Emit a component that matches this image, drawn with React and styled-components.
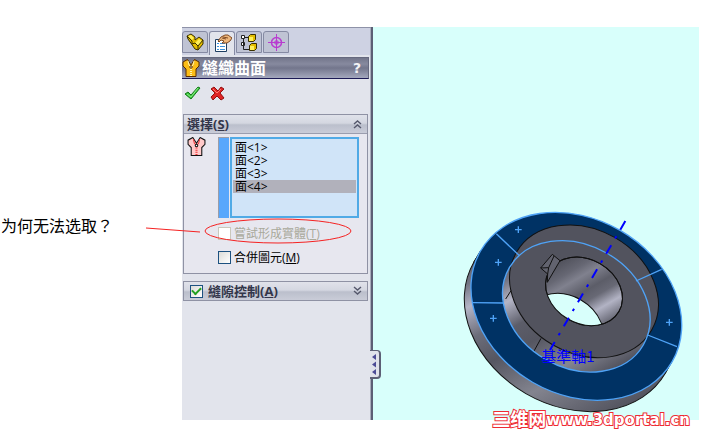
import React from 'react'
import styled, { createGlobalStyle } from 'styled-components'

const GlobalStyle = createGlobalStyle`
    * {
        box-sizing: border-box;
    }
    body {
        margin: 0;
        background: #fff;
        color: #000;
        font-family: 'Open Sans', 'Noto Sans CJK TC', sans-serif;
        font-size: 12px;
    }
`
const Page = styled.main`
    display: flex;
    min-height: 100vh;
    padding: 27px 11px 13px 0;
`
const Caption = styled.p`
    flex: none;
    width: 182px;
    margin: 0;
    padding: 186px 0 0 1px;
    font-family: 'Noto Sans CJK TC', 'Noto Sans CJK SC', sans-serif;
    font-size: 16px;
    line-height: 24px;
`
const Panel = styled.aside`
    position: relative;
    z-index: 1;
    flex: none;
    width: 191px;
    background: #e2e4ec;
    border-right: 2px solid #5c5f75;
    box-shadow: inset -1px 0 #a9acbc;
`
const Tabs = styled.div`
    display: flex;
    align-items: flex-end;
    gap: 1px;
    height: 28px;
    background: #ced2e3;
    border-top: 1px solid #8e92a8;
    box-shadow: inset -1px 0 #a9acbc;
`
const Tab = styled.button`
    display: flex;
    align-items: center;
    justify-content: center;
    width: 26px;
    height: ${props => props.$active ? '24px' : '22px'};
    margin-bottom: ${props => props.$active ? '0' : '2px'};
    padding: 0;
    background: ${props => props.$active ? '#e2e4ec' : '#bfc3d4'};
    border: 1px solid #858aa3;
    border-bottom-width: ${props => props.$active ? '0' : '1px'};
    border-radius: 3px 3px 0 0;
`
const TitleBar = styled.header`
    display: flex;
    align-items: center;
    gap: 2px;
    height: 22px;
    margin: 2px 2px 0 0;
    background: linear-gradient(#73768b, #878a9f 30%, #73768c 50%, #a4a8bd);
    border: solid #66697f;
    border-width: 1px 1px 1px 0;
    border-bottom-color: #1c1a55;
    color: #fff;
`
const Title = styled.h1`
    flex: 1;
    margin: 0;
    font-size: 16px;
    line-height: 18px;
`
const HelpButton = styled.button`
    width: 22px;
    padding: 0;
    background: none;
    border: 0;
    color: #f2f2f5;
    font-family: 'DejaVu Sans', sans-serif;
    font-size: 14px;
    font-weight: 700;
    line-height: 18px;
`
const Confirm = styled.div`
    display: flex;
    align-items: center;
    gap: 9px;
    height: 28px;
    padding-left: 2px;
`
const IconButton = styled.button`
    display: flex;
    padding: 0;
    background: none;
    border: 0;
`
const Group = styled.section`
    margin: 7px 3px 0 1px;
    background: #e7e7ef;
    border: 1px solid #8f92a4;
`
const GroupHead = styled.div`
    display: flex;
    align-items: center;
    gap: 5px;
    height: ${props => props.$checkable ? '18px' : '19px'};
    padding: 0 5px 0 ${props => props.$checkable ? '6px' : '3px'};
    background: linear-gradient(#e0e2ea, #d4d7e1 45%, #bbbfcc 55%, #c9ccd8);
    border-bottom: ${props => props.$checkable ? '0' : '1px solid #9a9dae'};
`
const GroupTitle = styled.h2`
    flex: 1;
    margin: 0;
    color: #33364a;
    font-size: 13px;
    line-height: 18px;
`
const Selection = styled.div`
    display: flex;
    padding: 3px 8px 0 3px;
`
const ColorBar = styled.div`
    width: 11px;
    margin: 0 1px 0 12px;
    background: #58a7fc;
    border: solid #9b9da8;
    border-width: 1px 0 0 1px;
`
const FaceList = styled.ul`
    flex: 1;
    height: 81px;
    margin: 0;
    padding: 2px 1px;
    background: #d0e4f8;
    border: 2px solid #50aae6;
    list-style: none;
`
const Face = styled.li`
    padding-left: 2px;
    background: ${props => props.$selected ? '#b1b1bb' : 'transparent'};
    line-height: 13px;
`
const Options = styled.div`
    display: flex;
    flex-direction: column;
    gap: 11px;
    padding: 9px 4px 9px 34px;
`
const Option = styled.div`
    position: relative;
    display: flex;
    align-items: center;
    gap: 3px;
    height: 13px;
`
const Label = styled.label`
    color: ${props => props.$disabled ? '#a9a99b' : 'inherit'};
    line-height: 13px;
`
const Checkbox = styled.input`
    display: grid;
    place-items: center;
    flex: none;
    width: 13px;
    height: 13px;
    margin: 0;
    appearance: none;
    background: linear-gradient(135deg, #dcdcd8, #fff);
    border: 1px solid #1c5180;
    &:disabled {
        background: #fff;
        border-color: #cac8bb;
    }
    &:checked::after {
        content: '';
        width: 7px;
        height: 4px;
        margin-bottom: 3px;
        border: solid #21a121;
        border-width: 0 0 2px 2px;
        transform: rotate(-45deg);
    }
`
const Markup = styled.svg`
    position: absolute;
    top: -9px;
    left: -72px;
    pointer-events: none;
`
const Splitter = styled.button`
    position: absolute;
    right: -10px;
    bottom: 41px;
    display: flex;
    align-items: center;
    justify-content: center;
    width: 11px;
    height: 29px;
    padding: 0;
    background: #dfe1ea;
    border: solid #5c5f75;
    border-width: 1px 2px 2px 0;
    border-radius: 0 4px 4px 0;
`
const Viewport = styled.section`
    position: relative;
    display: flex;
    flex: 1;
    align-items: flex-end;
    justify-content: flex-end;
    background: #d8fffb;
`
const Watermark = styled.div`
    position: absolute;
    right: 9px;
    bottom: -12px;
    display: flex;
    align-items: center;
    color: #fff;
    font-family: 'DejaVu Sans', 'Noto Sans CJK SC', sans-serif;
    font-size: 15px;
    font-weight: 700;
    line-height: 24px;
    white-space: nowrap;
    -webkit-text-stroke: 2px #ee2b33;
    paint-order: stroke fill;
`
const SiteName = styled.span`
    font-size: 18px;
`

const PartIcon = () => (
    <svg width="19" height="18" viewBox="0 0 19 18">
        <path d="m1 3 4-2 4 3v3l4-3 4 3v4l-5 6-3-1-7-10z" fill="#e3bd00" stroke="#3a3000" />
        <path d="m2 3 3-1 3 3-2 2zM9 10l4-4 3 2-4 5z" fill="#fff05a" />
        <path d="m1 3 5 5v3l3-1 3 3 5-6M12 13v4" fill="none" stroke="#3a3000" />
    </svg>
)

const PropertyIcon = () => (
    <svg width="19" height="19" viewBox="0 0 19 19">
        <path d="M2.500 5.500h11v12h-11z" fill="#fff" stroke="#1e3e62" />
        <path d="M4 9.500h2M7 9.500h5M4 12.500h2M7 12.500h5M4 15.500h2M7 15.500h5" stroke="#3d91dc" />
        <path d="m5 7 3-4 4-2h3l4 3-2 3-3 2H9l2-2-3-1-2 2z" fill="#edb67b" stroke="#804b25" />
        <path d="m9 4 4 1M10 3l5 1" stroke="#804b25" />
    </svg>
)

const TreeIcon = () => (
    <svg width="18" height="19" viewBox="0 0 18 19">
        <path d="M1.500 2.500h3v3h-3zM1.500 9.500h3v3h-3z" fill="#fff" stroke="#222" />
        <path d="M3.500 5v11.500H9M5 4.500h4" fill="none" stroke="#222" />
        <path d="m8.500 3.500 2-2h5v5l-2 2h-5zM9.500 12.500l2-2h5v5l-2 2h-5z" fill="#e3bd00" stroke="#3a3000" />
        <path d="M9 4h4v4H9zM10 13h4v4h-4z" fill="#fff05a" />
    </svg>
)

const TargetIcon = () => (
    <svg width="17" height="17" viewBox="0 0 17 17" fill="none" stroke="#b83bd0">
        <circle cx="8.500" cy="8.500" r="5" strokeWidth="1.500" />
        <path d="M8.500 0v17M0 8.500h17" />
        <path d="M6 8.500h5M8.500 6v5" strokeWidth="2" />
    </svg>
)

const VestIcon = ({ fill, line, zip, size }) => (
    <svg width={size} height={size} viewBox="0 0 18 18">
        <path d="M5.500.5 1 3v4l3 3v7.500h10V10l3-3V3L12.500.5 9 6z" fill={fill} stroke={line} />
        <path d="m6 2 1 4 2 2 2-2 1-4" fill="none" stroke={zip} />
        <path d="M9 10v7" stroke={zip} strokeWidth="2" strokeDasharray="1 1" />
        <circle cx="9" cy="8" r="1.200" fill="#fff" stroke={line} />
    </svg>
)

const OkIcon = () => (
    <svg width="17" height="16" viewBox="0 0 17 16">
        <path d="m1 9 3-2 3 3 7-8 2 1-9 11z" fill="#37c43b" stroke="#147a19" strokeLinejoin="round" />
        <path d="m3 9 4 3 7-9" fill="none" stroke="#8aec86" />
    </svg>
)

const CancelIcon = () => (
    <svg width="15" height="15" viewBox="0 0 15 15">
        <path d="m1 3 3-2 4 4 3-4 3 2-4 4 4 5-3 2-4-4-4 4-2-3 4-4z" fill="#e02424" stroke="#931010" strokeLinejoin="round" />
        <path d="m3 3 4 4 4-4" fill="none" stroke="#ff7b70" />
    </svg>
)

const Chevrons = ({ down }) => (
    <svg width="9" height="10" viewBox="0 0 9 10" fill="none" stroke="#55586c">
        <path d={down ? 'm1 1 3.500 3L8 1M1 5l3.500 3L8 5' : 'm1 5 3.500-3L8 5M1 9l3.500-3L8 9'} strokeWidth="1.400" />
    </svg>
)

const crosses = [[190, 74], [130, 172], [115, 340], [643, 352]]

const FlangeModel = () => (
    <svg width="244" height="215" viewBox="0 0 732 645" role="img" aria-label="基準軸1">
        <defs>
            <linearGradient id="rim" gradientUnits="userSpaceOnUse" x1="30" y1="260" x2="560" y2="600">
                <stop offset="0" stopColor="#5c5d69" />
                <stop offset="0.120" stopColor="#747583" />
                <stop offset="0.220" stopColor="#b4b5c6" />
                <stop offset="0.360" stopColor="#6c6d7a" />
                <stop offset="0.500" stopColor="#555661" />
                <stop offset="0.720" stopColor="#83848f" />
                <stop offset="1" stopColor="#50515c" />
            </linearGradient>
            <linearGradient id="hub" gradientUnits="userSpaceOnUse" x1="140" y1="260" x2="520" y2="480">
                <stop offset="0" stopColor="#5c5d69" />
                <stop offset="0.100" stopColor="#747583" />
                <stop offset="0.230" stopColor="#b4b5c6" />
                <stop offset="0.400" stopColor="#5c5d69" />
                <stop offset="0.550" stopColor="#555661" />
                <stop offset="0.800" stopColor="#858692" />
                <stop offset="1" stopColor="#50515c" />
            </linearGradient>
            <linearGradient id="bore" gradientUnits="userSpaceOnUse" x1="283" y1="199" x2="492" y2="319">
                <stop offset="0" stopColor="#4e4f59" />
                <stop offset="0.200" stopColor="#666773" />
                <stop offset="0.320" stopColor="#80818e" />
                <stop offset="0.500" stopColor="#5c5d68" />
                <stop offset="0.620" stopColor="#686975" />
                <stop offset="0.780" stopColor="#b2b3c4" />
                <stop offset="1" stopColor="#60616d" />
            </linearGradient>
            <clipPath id="boreClip">
                <ellipse cx="387" cy="259" rx="121" ry="96" transform="rotate(30 387 259)" />
            </clipPath>
        </defs>
        <g stroke="#111" strokeWidth="3">
            <ellipse cx="344" cy="338" rx="332" ry="263" transform="rotate(30 344 338)" fill="url(#rim)" />
            <path d="m76 138-20 34 575 332 20-34z" fill="url(#rim)" />
        </g>
        <ellipse cx="364" cy="304" rx="332" ry="263" transform="rotate(30 364 304)" fill="#003264" stroke="#4fa3f7" strokeWidth="4" />
        <ellipse cx="364" cy="304" rx="232" ry="184" transform="rotate(30 364 304)" fill="url(#hub)" />
        <ellipse cx="387" cy="259" rx="234" ry="186" transform="rotate(30 387 259)" fill="#52535e" stroke="#111" strokeWidth="3" />
        <g stroke="#111" strokeWidth="3" fill="none" strokeLinejoin="round">
            <ellipse cx="387" cy="259" rx="121" ry="96" transform="rotate(30 387 259)" fill="url(#bore)" />
            <g clipPath="url(#boreClip)">
                <ellipse cx="330" cy="368" rx="121" ry="96" transform="rotate(30 330 368)" fill="#d8fffb" />
            </g>
            <ellipse cx="387" cy="259" rx="121" ry="96" transform="rotate(30 387 259)" />
            <path d="m292 148 23 19-38 65 1-25-21-18z" fill="#62636f" />
            <path d="m297 153-16 35-24 1M281 188l-3 19" />
            <path d="m168 257-16 25M258 400l-22 40" />
        </g>
        <g stroke="#4fa3f7" strokeWidth="4" fill="none">
            <ellipse cx="364" cy="304" rx="232" ry="184" transform="rotate(30 364 304)" />
            <path d="m124 86 68 65M53 293l92 1M543 228l77-35M578 390l88 35" />
            {crosses.map(([x, y]) => (
                <path key={x} d={`M${x - 10} ${y}h20M${x} ${y - 10}v20`} />
            ))}
        </g>
        <path d="M511 48 285 435" stroke="#0000ff" strokeWidth="6" strokeDasharray="30 23 8 23" />
        <text x="259" y="472" fill="#0000ff" fontSize="45" fontFamily="'Noto Sans CJK TC', sans-serif">基準軸1</text>
    </svg>
)

const faces = ['面<1>', '面<2>', '面<3>', '面<4>']

class App extends React.Component {
    state = { selected: 3, merge: false, gap: true }

    render() {
        return (
            <Page>
                <GlobalStyle />
                <Caption lang="zh-Hant">为何无法选取？</Caption>
                <Panel lang="zh-Hant">
                    <Tabs>
                        <Tab type="button" aria-label="FeatureManager"><PartIcon /></Tab>
                        <Tab type="button" aria-label="PropertyManager" $active><PropertyIcon /></Tab>
                        <Tab type="button" aria-label="ConfigurationManager"><TreeIcon /></Tab>
                        <Tab type="button" aria-label="DimXpertManager"><TargetIcon /></Tab>
                    </Tabs>
                    <TitleBar>
                        <VestIcon fill="#fbbd18" line="#5a2c00" zip="#fff3b0" size={18} />
                        <Title>縫織曲面</Title>
                        <HelpButton type="button">?</HelpButton>
                    </TitleBar>
                    <Confirm>
                        <IconButton type="button" aria-label="確定"><OkIcon /></IconButton>
                        <IconButton type="button" aria-label="取消"><CancelIcon /></IconButton>
                    </Confirm>
                    <Group>
                        <GroupHead>
                            <GroupTitle>選擇(<u>S</u>)</GroupTitle>
                            <Chevrons />
                        </GroupHead>
                        <Selection>
                            <VestIcon fill="#ffcaca" line="#111" zip="#f03838" size={19} />
                            <ColorBar />
                            <FaceList role="listbox" aria-label="選擇">
                                {faces.map((face, index) => (
                                    <Face
                                        key={face}
                                        role="option"
                                        aria-selected={index === this.state.selected}
                                        $selected={index === this.state.selected}
                                        onClick={() => this.setState({ selected: index })}
                                    >
                                        {face}
                                    </Face>
                                ))}
                            </FaceList>
                        </Selection>
                        <Options>
                            <Option>
                                <Checkbox type="checkbox" id="solid" disabled />
                                <Label htmlFor="solid" $disabled>嘗試形成實體(<u>T</u>)</Label>
                                <Markup width="206" height="27" viewBox="0 0 206 27" fill="none" stroke="#f52222">
                                    <path d="m0 10 54 4" />
                                    <ellipse cx="132" cy="13" rx="73" ry="12" />
                                </Markup>
                            </Option>
                            <Option>
                                <Checkbox
                                    type="checkbox"
                                    id="merge"
                                    checked={this.state.merge}
                                    onChange={event => this.setState({ merge: event.target.checked })}
                                />
                                <Label htmlFor="merge">合併圖元(<u>M</u>)</Label>
                            </Option>
                        </Options>
                    </Group>
                    <Group>
                        <GroupHead $checkable>
                            <Checkbox
                                type="checkbox"
                                id="gap"
                                checked={this.state.gap}
                                onChange={event => this.setState({ gap: event.target.checked })}
                            />
                            <GroupTitle><label htmlFor="gap">縫隙控制(<u>A</u>)</label></GroupTitle>
                            <Chevrons down />
                        </GroupHead>
                    </Group>
                    <Splitter type="button" aria-label="收合">
                        <svg width="5" height="21" viewBox="0 0 5 21" fill="#4b4a95">
                            <path d="m0 3 4-3v6zM0 10.500l4-3v6zM0 18l4-3v6z" />
                        </svg>
                    </Splitter>
                </Panel>
                <Viewport>
                    <FlangeModel />
                    <Watermark><SiteName>三维网</SiteName>www.3dportal.cn</Watermark>
                </Viewport>
            </Page>
        )
    }
}

export default App
